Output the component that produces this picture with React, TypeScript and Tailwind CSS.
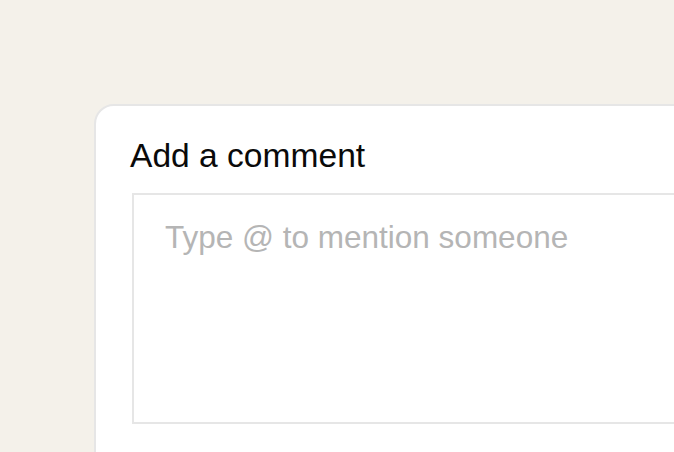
import React from "react";

export default function App() {
  return (
    <div
      className="w-[674px] h-[452px] overflow-hidden bg-[#f4f1ea] pl-[94px] pt-[104px]"
      style={{ fontFamily: '"Liberation Sans", Arial, sans-serif' }}
    >
      <div className="w-[700px] h-[420px] rounded-[20px] border-2 border-[#e6e6e6] bg-white pl-[34px] pt-[30px]">
        <h2 className="text-[33.6px] leading-[40px] text-[#0a0a0a] font-normal">Add a comment</h2>
        <div className="mt-[17px] ml-[2px]">
          <textarea
            className="block w-[600px] h-[231px] resize-none border-2 border-[#e6e6e6] bg-white pl-[31px] pt-[23px] text-[31.5px] leading-[38px] text-[#222] outline-none placeholder:text-[#b5b5b5]"
            style={{ fontFamily: '"Liberation Sans", Arial, sans-serif' }}
            placeholder="Type @ to mention someone"
          />
        </div>
      </div>
    </div>
  );
}
